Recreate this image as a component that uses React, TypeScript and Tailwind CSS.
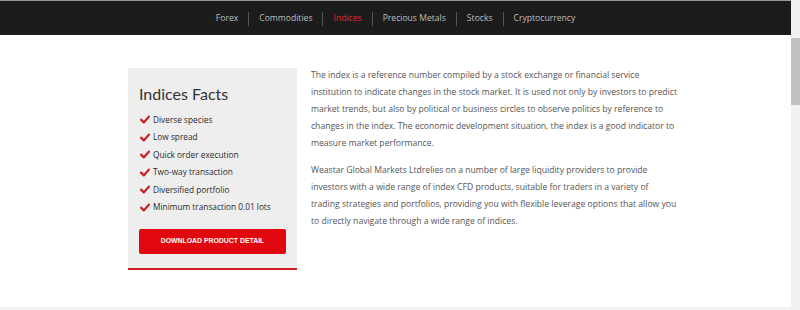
import React from "react";

const navItems = ["Forex", "Commodities", "Indices", "Precious Metals", "Stocks", "Cryptocurrency"];
const facts = [
  "Diverse species",
  "Low spread",
  "Quick order execution",
  "Two-way transaction",
  "Diversified portfolio",
  "Minimum transaction 0.01 lots",
];

const p1 = [
  "The index is a reference number compiled by a stock exchange or financial service",
  "institution to indicate changes in the stock market. It is used not only by investors to predict",
  "market trends, but also by political or business circles to observe politics by reference to",
  "changes in the index. The economic development situation, the index is a good indicator to",
  "measure market performance.",
];
const p2 = [
  "Weastar Global Markets Ltdrelies on a number of large liquidity providers to provide",
  "investors with a wide range of index CFD products, suitable for traders in a variety of",
  "trading strategies and portfolios, providing you with flexible leverage options that allow you",
  "to directly navigate through a wide range of indices.",
];

function Check() {
  return (
    <svg width="10" height="9" viewBox="0 0 10 9" className="shrink-0">
      <path d="M1 4.6 L3.8 7.4 L9 1.6" fill="none" stroke="#c8232b" strokeWidth="2.2" strokeLinecap="round" strokeLinejoin="round" />
    </svg>
  );
}

function Lines({ lines }: { lines: string[] }) {
  return (
    <p>
      {lines.map((l, i) => (
        <React.Fragment key={i}>
          {l}
          {i < lines.length - 1 && <br />}
        </React.Fragment>
      ))}
    </p>
  );
}

export default function App() {
  return (
    <div className="w-[800px] h-[310px] flex overflow-hidden bg-white" style={{ fontFamily: '"Open Sans", "Noto Sans", sans-serif' }}>
      <div className="flex-1 flex flex-col">
        <nav className="h-[35px] border-t border-[#9a9a9a] bg-[#1c1c1c] flex items-center justify-center pt-[1px]">
          {navItems.map((item, i) => (
            <React.Fragment key={item}>
              {i > 0 && <span className="w-px h-[14px] bg-[#555555] mx-[10px]" />}
              <span className={`text-[8.6px] ${item === "Indices" ? "text-[#e0252b]" : "text-[#bdbdbd]"}`}>{item}</span>
            </React.Fragment>
          ))}
        </nav>
        <main className="flex-1 flex items-start pt-[33px] pl-[128px]">
          <div className="w-[169px] h-[202px] bg-[#eeeeee] border-b-2 border-solid border-b-[#d32027] pt-[15px] pl-[11px]">
            <h2 className="text-[16px] leading-[22px] text-[#333333] font-normal" style={{ fontFamily: 'Lato, "Open Sans", sans-serif' }}>Indices Facts</h2>
            <ul className="mt-[6px] flex flex-col">
              {facts.map((f) => (
                <li key={f} className="h-[17.5px] flex items-center gap-[3px] pl-[1px] text-[8.3px] text-[#2a2a2a]">
                  <Check />
                  <span>{f}</span>
                </li>
              ))}
            </ul>
            <button className="mt-[13px] w-[147px] h-[25px] rounded-[2px] bg-[#e0080e] text-white text-[6.9px] font-bold uppercase" style={{ fontFamily: '"Liberation Sans", Arial, sans-serif' }}>
              Download Product Detail
            </button>
          </div>
          <div className="ml-[14px] w-[390px] whitespace-nowrap text-[8.6px] leading-[17px] text-[#555555] -mt-[1px] flex flex-col gap-[10px]">
            <Lines lines={p1} />
            <Lines lines={p2} />
          </div>
        </main>
        <div className="h-[3px] bg-[#f2f2f2]" />
      </div>
      <div className="w-[9px] bg-[#f1f1f1] flex flex-col">
        <div className="mt-[38px] h-[67px] bg-[#c1c1c1]" />
      </div>
    </div>
  );
}
